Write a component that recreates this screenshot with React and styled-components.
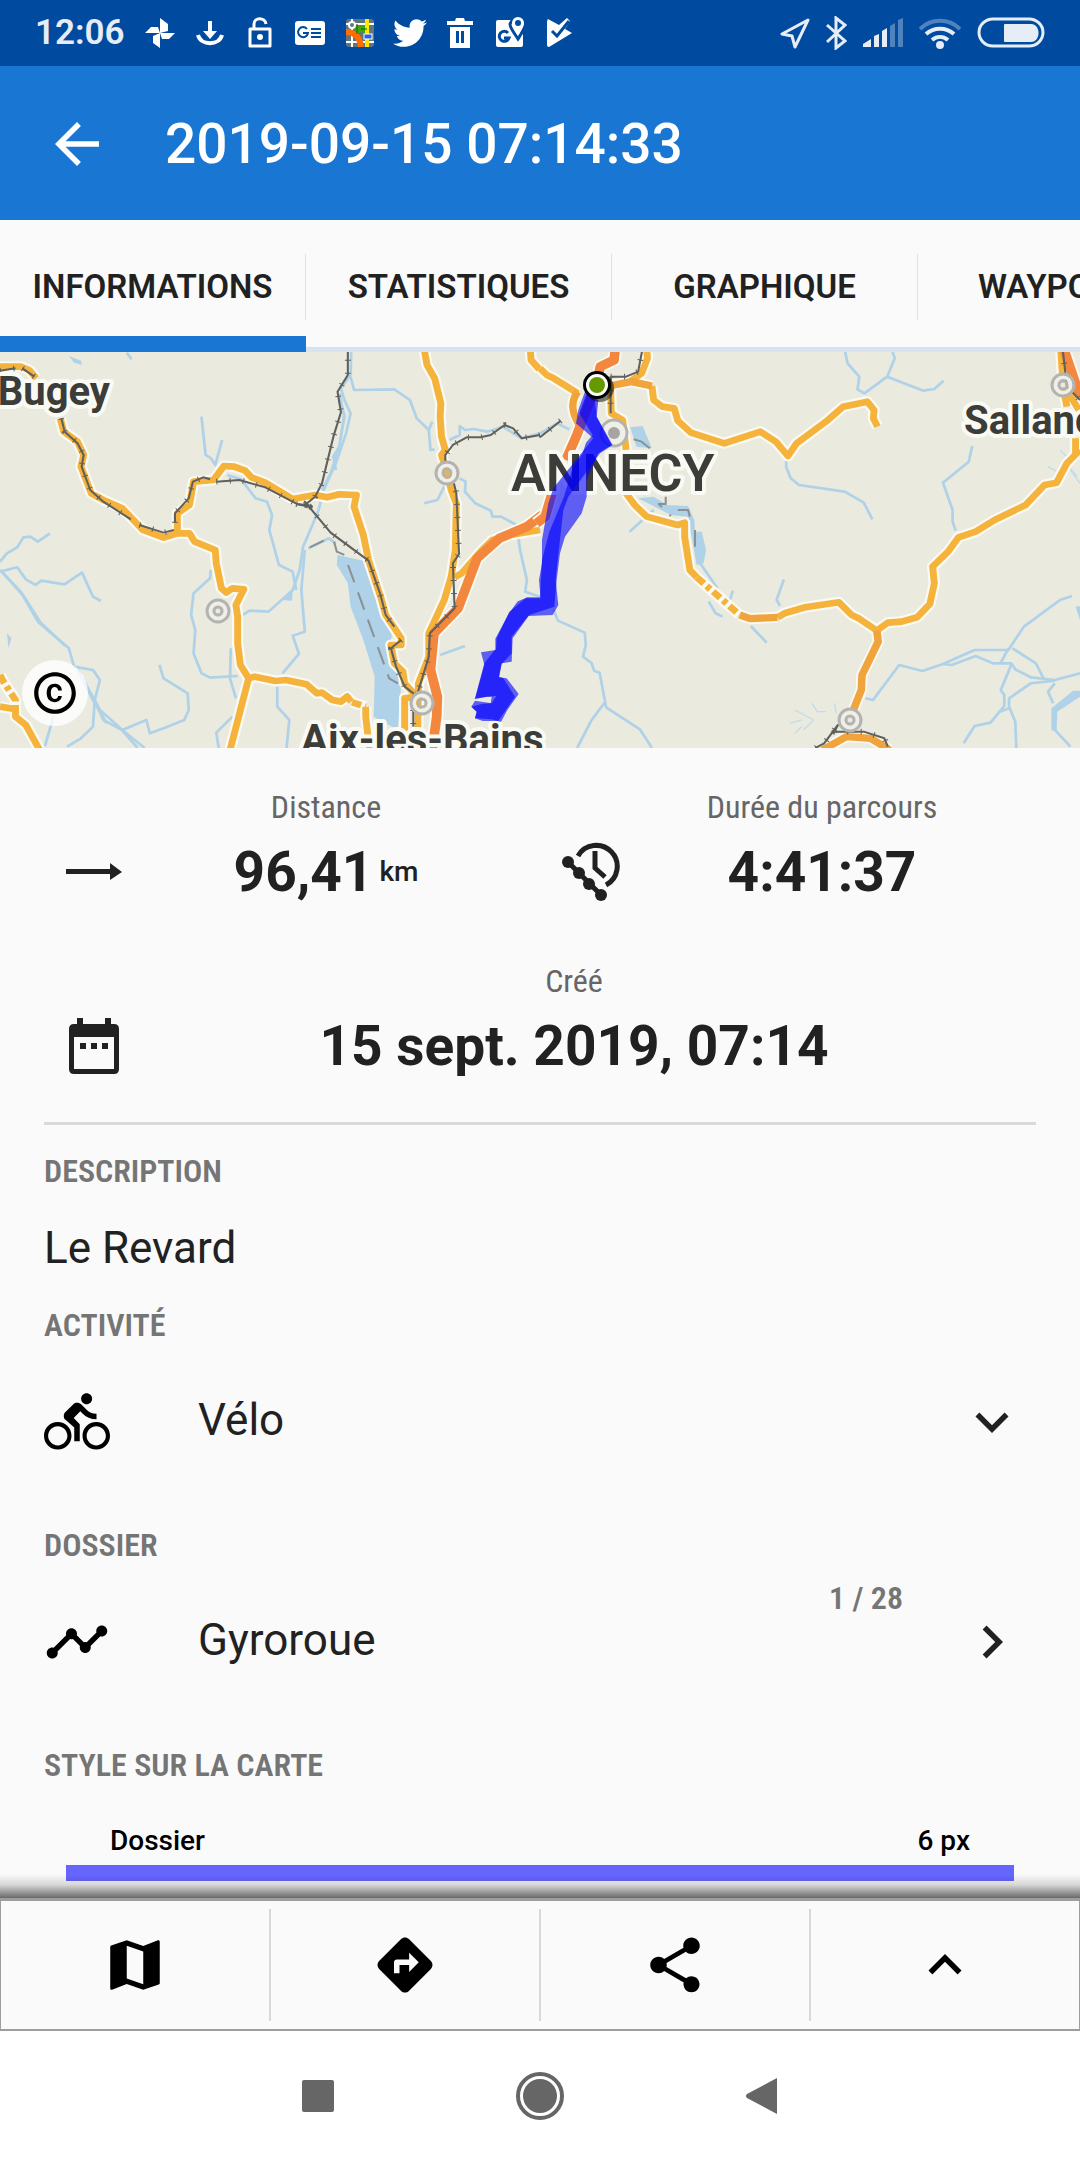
import React, { Component } from 'react';
import styled, { createGlobalStyle } from 'styled-components';
import {
  MdArrowBack,
  MdCopyright,
  MdDirections,
  MdDirectionsBike,
  MdKeyboardArrowDown,
  MdKeyboardArrowRight,
  MdKeyboardArrowUp,
  MdMap,
  MdShare,
  MdTimeline
} from 'react-icons/md';
import { FaTwitter } from 'react-icons/fa';

const GlobalStyle = createGlobalStyle`
  * {
    box-sizing: border-box;
  }
  body {
    margin: 0;
    background: #fafafa;
    color: #212121;
    font-family: Roboto, 'Liberation Sans', sans-serif;
  }
  button, select {
    margin: 0;
    padding: 0;
    border: none;
    background: none;
    color: inherit;
    font: inherit;
  }
  h1, h2, p, dl, dd, ul {
    margin: 0;
    padding: 0;
    font-weight: 400;
  }
  svg {
    display: block;
    flex: none;
  }
`;

const condensed = `'Roboto Condensed', Roboto, 'Liberation Sans', sans-serif`;

const Screen = styled.div`
  display: flex;
  flex-direction: column;
  min-height: 100vh;
`;

const StatusBar = styled.div`
  display: flex;
  align-items: center;
  justify-content: space-between;
  height: 66px;
  padding: 0 35px;
  background: #004ba0;
  color: #e6edf6;
`;

const StatusGroup = styled.div`
  display: flex;
  align-items: center;
  gap: 16px;
`;

const Clock = styled.time`
  padding-right: 2px;
  font-size: 35px;
  line-height: 40px;
  font-weight: 600;
`;

const AppBar = styled.header`
  display: flex;
  align-items: center;
  gap: 55px;
  height: 154px;
  padding: 2px 44px 0;
  background: #1976d2;
  color: #fff;
`;

const IconButton = styled.button`
  display: flex;
  cursor: pointer;
`;

const Title = styled.h1`
  font-size: 55px;
  line-height: 66px;
  font-weight: 500;
`;

const TabList = styled.nav`
  display: flex;
  height: 132px;
  overflow: hidden;
  box-shadow: inset 0 -5px #d6e4f2;
`;

const Tab = styled.button`
  flex: 0 0 306px;
  display: flex;
  align-items: center;
  padding-top: 2px;
  font-size: 33px;
  line-height: 40px;
  font-weight: 600;
  cursor: pointer;
  box-shadow: ${props => (props.$active ? 'inset 0 -16px #1976d2' : 'none')};

  span {
    flex: 1;
    text-align: center;
  }

  &::after {
    content: '';
    width: 1px;
    height: 66px;
    background: #d6e4f2;
  }
`;

const MapBox = styled.section`
  position: relative;
  height: 396px;
  background: #eaeadf;
`;

const MapDrawing = styled.svg`
  width: 100%;
  height: 100%;
`;

const MapLabel = styled.text`
  fill: #3c3d38;
  stroke: #fafaf5;
  stroke-width: 8px;
  stroke-linejoin: round;
  paint-order: stroke;
  font-size: ${props => (props.$city ? '52px' : '40px')};
  font-weight: ${props => (props.$city ? 600 : 700)};
`;

const Attribution = styled.button`
  position: absolute;
  left: 22px;
  bottom: 22px;
  padding: 8px;
  border-radius: 50%;
  background: rgba(255, 255, 255, 0.8);
  color: #000;
  cursor: pointer;
`;

const Facts = styled.dl`
  display: grid;
  grid-template-columns: 1fr 1fr;
  row-gap: 56px;
  padding: 39px 44px 43px;
`;

const FactBox = styled.div`
  display: grid;
  grid-template-columns: 100px 1fr;
  grid-column: ${props => (props.$wide ? '1 / -1' : 'auto')};
  row-gap: 12px;
  align-items: center;
  justify-items: center;
  padding-right: 32px;
`;

const FactLabel = styled.dt`
  grid-column: 2;
  color: #666;
  font-family: ${condensed};
  font-size: 32px;
  line-height: 40px;
`;

const FactValue = styled.dd`
  display: flex;
  align-items: center;
  gap: 6px;
  font-size: 55px;
  line-height: 66px;
  font-weight: 700;

  small {
    font-size: 28px;
    line-height: 36px;
    font-weight: 500;
  }
`;

const Details = styled.main`
  flex: 1;
  margin: 0 44px;
  border-top: 3px solid #d9d9d9;
`;

const Heading = styled.h2`
  display: block;
  margin-top: 26px;
  color: #757575;
  font-family: ${condensed};
  font-size: 32px;
  line-height: 40px;
  font-weight: 600;
  text-transform: uppercase;
`;

const Description = styled.p`
  padding: 30px 0 4px;
  font-size: 44px;
  line-height: 54px;
`;

const rowStyle = `
  display: flex;
  align-items: center;
  width: 100%;
  height: 154px;
  padding-right: 11px;
  text-align: left;
`;

const PickerRow = styled.div`
  ${rowStyle}
`;

const FolderRow = styled.button`
  ${rowStyle}
  cursor: pointer;
`;

const rowText = `
  flex: 1;
  padding: 0 0 4px;
  margin-left: 88px;
  font-size: 44px;
  line-height: 54px;
`;

const ActivitySelect = styled.select`
  ${rowText}
  appearance: none;
`;

const FolderName = styled.span`
  ${rowText}
`;

const Count = styled.span`
  align-self: flex-start;
  margin: 13px 56px 0 0;
  color: #757575;
  font-family: ${condensed};
  font-size: 32px;
  line-height: 40px;
  font-weight: 600;
`;

const StylePreview = styled.div`
  margin: 38px 22px 17px;
  color: #000;
  font-size: 28px;
  line-height: 36px;
  font-weight: 500;
  text-shadow: 0 0 3px #fff;
`;

const StyleCaption = styled.div`
  display: flex;
  justify-content: space-between;
  padding: 0 44px 6px;
`;

const StyleLine = styled.div`
  height: 16px;
  background: #66f;
`;

const Toolbar = styled.footer`
  position: relative;
  display: flex;
  height: 133px;
  padding: 8px 0;
  border: 1px solid #9e9e9e;
  border-top-width: 3px;
  border-bottom-width: 2px;

  &::before {
    content: '';
    position: absolute;
    left: -1px;
    right: -1px;
    bottom: 100%;
    height: 24px;
    margin-bottom: 3px;
    background: linear-gradient(
      rgba(0, 0, 0, 0),
      rgba(0, 0, 0, 0.14) 45%,
      rgba(0, 0, 0, 0.58)
    );
  }
`;

const ToolButton = styled.button`
  flex: 1;
  display: flex;
  align-items: center;
  justify-content: center;
  color: #000;
  cursor: pointer;

  & + & {
    border-left: 2px solid #d9d9d9;
  }
`;

const SystemNav = styled.nav`
  display: grid;
  grid-template-columns: repeat(3, 222px);
  justify-content: center;
  align-items: center;
  justify-items: center;
  height: 129px;
  background: #fff;
  color: #666;
`;

// the map is digitised in two halves, x from the left edge and from the middle
const LEFT = 'scale(0.3444 0.3333) translate(0 -6)';
const RIGHT = 'translate(540 0) scale(0.3444 0.3333) translate(0 -6)';
const TRACK = 'translate(420 0) scale(0.3333) translate(0 -6)';

const leftMap = {
  lakes: [
    'M980 615L1055 632L1070 660L1105 780L1138 855L1130 890L1150 960L1165 1000L1155 1140L1085 1100L1088 980L1055 870L1018 770L1010 700L978 645Z',
    'M20 850L33 865L25 895Z',
    'M820 750L850 722L848 752Z',
    'M200 18L235 32L238 44L215 38Z'
  ],
  rivers: [
    'M1020 0L1018 75L990 115L1000 150L1018 190L1005 250L975 340L940 420L925 480L905 530L880 590L870 660L850 720L780 785L725 782L705 795',
    'M985 130L1000 200L985 290L960 370L935 420M1000 190L985 290L968 320L975 360',
    'M1018 80L1028 120L1145 118L1190 150L1210 205L1245 240L1250 300L1262 298M1245 240L1255 215',
    'M1305 270L1335 255L1335 228L1350 240L1375 237L1415 245L1460 230L1515 265L1568 250',
    'M1335 385L1352 395L1350 425L1380 460L1425 482L1430 500L1455 500L1500 525L1510 600L1530 690L1525 725L1568 740',
    'M1232 460L1270 450L1295 400M1278 915L1350 888M368 8L382 28',
    'M585 200L597 315L613 325L625 345L645 270',
    'M660 375L700 388L742 445L775 455L790 495L782 540L810 645L850 665L860 720',
    'M885 600L875 720L885 845L850 857L868 912L820 970M805 1000L805 1070L840 1110L832 1194',
    'M612 660L610 685L562 730L555 795L567 840L562 910L585 970L610 983L690 978',
    'M670 895L668 985L685 1045M675 1100L628 1148L635 1194',
    'M0 635L20 610L50 592L68 562L88 560L110 575L145 550',
    'M0 665L50 652L75 688L103 705L120 692L187 703L238 668L270 740L293 753',
    'M0 660L60 725L110 815L200 895L215 950L270 960L290 990L275 1050L300 1110L355 1140L420 1194',
    'M10 670L70 740L118 818L190 888M240 985L290 1080L345 1130L400 1194M225 960L270 1050L310 1120',
    'M275 1050L270 1130L235 1165L195 1190M155 1100L130 1190',
    'M355 1140L425 1110L435 1150L475 1135L535 1110L548 1080L545 1030L475 985L463 945',
    'M895 595L955 565L975 580'
  ],
  roads: [
    'M0 50L60 50L85 60L105 85',
    'M175 205L185 245L225 275L243 315L235 350L265 430L300 450L355 475L415 540L475 563L515 550L550 550L565 575L625 600L628 640L643 715L657 728L675 715L708 718L685 765L690 800L690 880L698 945L722 985L740 980L800 993L830 990L890 1003L920 1030L935 1028L965 1050L990 1055L1008 1040L1020 1055',
    'M515 550L515 490L550 465L562 395L620 390L650 348L680 350L712 362L730 382L770 398L850 447L915 435L950 442L985 433L1035 435L1028 470L1055 555L1070 630L1105 740L1120 795L1165 865L1165 885L1135 885L1145 940L1170 965L1175 1000L1210 1040',
    'M722 985L668 1200',
    'M1232 0L1240 45L1262 85L1280 160L1278 200L1282 260L1293 300L1282 315L1298 370L1310 420L1325 460L1322 600L1310 680L1290 750L1245 850L1245 920L1215 1000L1212 1200',
    'M1320 682L1340 670L1400 600L1430 570L1480 555L1568 540',
    'M1540 0L1542 30L1568 60',
    'M1210 1040L1175 1045L1175 1200M1062 1070L1062 1100L1073 1200',
    'M0 1070L45 1078L45 1100L75 1125L115 1200'
  ],
  tunnels: ['M1022 1057L1062 1070', 'M0 975L10 995L45 1050L45 1078'],
  darkRoads: [],
  motorways: [
    'M1580 490L1530 530L1450 565L1385 625L1330 775L1260 850L1250 960L1270 1040L1268 1100L1255 1200'
  ],
  rails: [
    'M0 62L45 55M65 55L100 80',
    'M178 205L188 245L225 280L243 315L237 350L262 420L300 455L380 508M405 525L475 548L505 540M508 518L508 490L548 445L560 395L590 382L610 388',
    'M628 395L695 390L770 412L862 462L885 465L915 440L935 400L968 260L990 187L980 125L1010 75L1010 0',
    'M860 462L900 470L885 455L960 548L1070 632L1105 735L1120 795L1145 830M1165 870L1135 895L1150 950L1175 1010L1210 1038L1245 920L1248 850L1320 775L1315 640L1333 612L1325 430L1318 400',
    'M1293 345L1293 315L1315 285L1355 262L1395 262L1425 255L1465 225L1490 235L1515 265L1568 255',
    'M1200 1080L1200 1130'
  ],
  borders: ['M900 592L940 572M970 575L978 605L1000 615L1130 985L1155 1000']
};

const rightMap = {
  lakes: [
    'M262 232L298 228L325 295L280 290Z',
    'M285 445L330 440L370 465L430 468L448 510L450 545L470 545L482 600L475 640L455 645L440 560L430 500L380 495Z',
    'M1568 1022L1548 1022L1485 1075L1485 1140L1500 1145L1502 1085L1568 1040Z',
    'M1555 770L1568 768L1568 810Z'
  ],
  rivers: [
    'M40 780L52 812L130 848L133 885L125 920L150 940L157 962L173 968L192 1072L290 1138L325 1194M190 1055L150 1110L108 1194',
    'M0 250L50 220L85 238M885 0L893 40L927 80L922 118L942 130L1008 80L1113 122L1145 117L1172 92M1008 80L1030 25L1022 0',
    'M715 330L715 352L728 385L752 405L885 425L940 458L965 508',
    'M1255 288L1245 335L1170 398L1198 480L1198 515L1207 542',
    'M465 640L515 715M708 688L687 750L697 768M560 722L550 755M490 755L510 790L530 800M612 828L658 878M260 545L330 480',
    'M945 1045L967 1050L1043 945L1110 963L1170 942L1262 900L1360 900L1405 830L1510 750L1545 738',
    'M1170 942L1195 945L1265 918L1315 940L1368 940L1380 958L1425 982L1495 990L1568 970M1372 895L1440 940L1462 985M1360 895L1338 938',
    'M1368 945L1338 1020L1348 1035L1348 1068L1308 1118L1262 1128L1230 1180M1495 992L1425 1000L1362 1045L1362 1070L1380 1115L1383 1194M1335 1085L1362 1075M1495 1000L1475 1025L1490 1060M1495 1140L1540 1190'
  ],
  streams: [
    'M740 1080L795 1110L765 1140M725 1120L760 1110M790 1060L805 1085L830 1085M740 1150L760 1130M855 1060L860 1090',
    'M1475 350L1510 370M1490 390L1530 360M1510 300L1540 330M1540 360L1568 400M1520 330L1560 380'
  ],
  roads: [
    'M0 55L20 75L40 85L110 130',
    'M310 0L312 25L295 70L265 92M205 120L207 190L240 210L250 300',
    'M325 108L330 150L355 170L390 175L400 212L438 248L535 280L640 245L685 275L720 318L745 280L830 215L880 170L950 155L970 180L968 205L980 230',
    'M250 430L275 465L310 500L400 525L420 518L420 560L435 660L455 682',
    'M690 802L710 790L770 772L868 757L905 795L925 805L978 842L1010 818L1050 815L1095 802L1132 762L1145 700L1140 650L1185 605L1215 562L1265 545L1320 510L1410 465L1465 405L1500 398L1530 340L1568 300M1555 265L1555 310',
    'M1512 0L1518 90M1520 120L1530 170M1535 130L1568 185'
  ],
  tunnels: ['M455 682L580 795'],
  darkRoads: [
    'M110 125C88 155 90 185 115 225',
    'M170 130L215 105L265 95L325 108',
    'M580 795L610 806L690 802M978 842L982 875L935 975L933 1020L908 1085',
    'M820 1200L890 1160L960 1165L1015 1200'
  ],
  motorways: [
    'M218 0L215 30L175 50L165 100L120 220L105 260L75 330',
    'M35 430L15 500L-10 520',
    'M1522 0L1568 140'
  ],
  rails: [
    'M205 80L205 190M205 80L250 80L285 65L297 0M60 212L0 262',
    'M800 1194L825 1180L865 1125L855 1145L940 1145L1000 1165L1010 1190M1518 0L1530 110L1568 150'
  ],
  borders: ['M272 268L295 275L325 300M365 440L365 462L345 462L380 498M400 480L430 480L435 500M450 540L450 590']
};

const towns = [[447, 121], [218, 259], [422, 351], [1063, 33], [850, 368]];

const lines = (list, props) => list.map(d => <path key={d} d={d} {...props} />);

const MapHalf = ({ data, transform }) => (
  <g transform={transform} fill="none" strokeLinejoin="round">
    {lines(data.lakes, { fill: '#b0d2e8' })}
    {lines(data.rivers, { stroke: '#b0d2e8', strokeWidth: 8 })}
    {lines(data.streams || [], { stroke: '#c3dcea', strokeWidth: 4 })}
    {lines(data.borders, { stroke: '#8a9195', strokeWidth: 6, strokeDasharray: '55 32' })}
    {lines([...data.roads, ...data.tunnels, ...data.darkRoads], { stroke: '#fafaf5', strokeWidth: 33 })}
    {lines(data.motorways, { stroke: '#fafaf5', strokeWidth: 39 })}
    {lines(data.roads, { stroke: '#f6b33c', strokeWidth: 20 })}
    {lines(data.tunnels, { stroke: '#f6b33c', strokeWidth: 20, strokeDasharray: '28 11 14 11' })}
    {lines(data.darkRoads, { stroke: '#f1a43c', strokeWidth: 22 })}
    {lines(data.motorways, { stroke: '#f3873d', strokeWidth: 28 })}
    {lines(data.rails, { stroke: '#60605c', strokeWidth: 6 })}
    {lines(data.rails, { stroke: '#60605c', strokeWidth: 17, strokeDasharray: '3 36' })}
  </g>
);

const TrackMap = () => (
  <MapDrawing viewBox="0 0 1080 396" preserveAspectRatio="xMidYMid slice" role="img" aria-label="Carte du parcours">
    <MapHalf data={leftMap} transform={LEFT} />
    <MapHalf data={rightMap} transform={RIGHT} />
    {towns.map(([x, y]) => (
      <g key={x} fill="none" stroke="#b3b3b1">
        <circle cx={x} cy={y} r="8" stroke="#efefe8" strokeWidth="4" />
        <circle cx={x} cy={y} r="11" strokeWidth="3" />
        <circle cx={x} cy={y} r="4" strokeWidth="3" />
      </g>
    ))}
    <circle cx="614" cy="81" r="13" fill="#efefe8" stroke="#b3b3b1" strokeWidth="3" />
    <circle cx="614" cy="81" r="6" fill="#a5a5a3" />
    <MapLabel x="110" y="53" textAnchor="end">Bugey</MapLabel>
    <MapLabel x="511" y="139" $city>ANNECY</MapLabel>
    <MapLabel x="301" y="401">Aix-les-Bains</MapLabel>
    <MapLabel x="964" y="82">Sallanches</MapLabel>
    <g transform={TRACK} fill="#00f" fillOpacity="0.6">
      <path d="M495 125L475 180L468 220L520 265L400 415L385 460L366 570V640L357 690L362 745H316L293 754L266 792L226 866V898L193 940L164 1048L200 1040L215 1040L212 1060L185 1062L154 1070L170 1085L165 1105L188 1113H235L285 1040L250 985L237 980L245 942L275 910V860L325 798L398 795L415 765L407 690L412 640L430 480L445 440L540 310L578 285L530 200L535 150Z" />
      <path d="M500 130L478 190L518 255L498 278L488 310L456 360L432 440L388 545L366 630L360 742L320 742L268 785L230 865L228 900L183 907L193 945L166 1045L230 1037L215 1060L165 1052L154 1070L170 1085L165 1105L215 1108L243 1116L262 1080L296 1032L260 985L237 982L245 940L275 935L278 865L328 795L403 770L410 690L420 610L435 560L485 490L500 440V390L535 310L575 285L530 200L525 150Z" />
    </g>
    <circle cx="600" cy="36" r="14" fill="#000" fillOpacity="0.5" />
    <circle cx="597" cy="33" r="14" />
    <circle cx="597" cy="33" r="11" fill="#fff" />
    <circle cx="597" cy="33" r="8" fill="#669900" />
  </MapDrawing>
);

const StatusIcon = ({ children, width = 34 }) => (
  <svg width={width} height="34" viewBox={`0 0 ${width} 34`} fill="#fff" aria-hidden="true">
    {children}
  </svg>
);

const Notifications = () => (
  <StatusGroup>
    <Clock>12:06</Clock>
    <StatusIcon>
      <path d="M17 2L25 8V15L17 17ZM32 17L26 23H19L17 17ZM17 32L10 27V20L17 17ZM2 17L8 11H15L17 17Z" />
    </StatusIcon>
    <StatusIcon>
      <path d="M15 5H19V15H24L17 23L10 15H15Z" />
      <path d="M5 19C8 30 26 30 29 19" fill="none" stroke="#fff" strokeWidth="4" />
    </StatusIcon>
    <StatusIcon>
      <path d="M11 12V8C11 1 22 1 23 8M7 13H27V30H7Z" fill="none" stroke="#fff" strokeWidth="3" strokeLinejoin="round" />
      <circle cx="17" cy="21" r="3" />
    </StatusIcon>
    <StatusIcon>
      <rect x="2" y="5" width="30" height="24" rx="3" />
      <path d="M14 13A5 5 0 1 0 15 17H10M18 13H28M18 17H28M18 21H28" fill="none" stroke="#004ba0" strokeWidth="2" />
    </StatusIcon>
    <StatusIcon>
      <rect x="3" y="3" width="28" height="28" rx="3" fill="#5e7480" />
      <path d="M11 9L24 7V18L19 16L12 18Z" fill="#3fa70b" />
      <path d="M9 3V31M3 8H31M3 26H31" stroke="#fff" strokeWidth="2" />
      <circle cx="9" cy="9" r="3" fill="#5e7480" stroke="#fff" strokeWidth="2" />
      <path d="M24 3V31" stroke="#ffe800" strokeWidth="4" />
      <path d="M3 16C12 16 17 22 18 31" fill="none" stroke="#ff6d00" strokeWidth="6" />
      <path d="M14 8V18M18 13H24" stroke="#1c5c14" strokeWidth="1" />
      <rect x="21" y="18" width="8" height="5" fill="#2a62e0" stroke="#fff" />
    </StatusIcon>
    <FaTwitter size={34} color="#fff" aria-hidden="true" />
    <StatusIcon>
      <path d="M4 5H12L13 2H21L22 5H30V9H4ZM7 11H27V32H7ZM13 15V27H16V15ZM18 15V27H21V15Z" fillRule="evenodd" />
    </StatusIcon>
    <StatusIcon>
      <rect x="3" y="4" width="27" height="27" rx="2" />
      <path d="M15 17A5 5 0 1 0 16 22H11" fill="none" stroke="#004ba0" strokeWidth="3" />
      <path d="M25 23C20 15 17 12 17 8A8 8 0 0 1 32 8C32 12 30 15 25 23Z" stroke="#004ba0" strokeWidth="3" />
      <path d="M25 19C21 13 19 10 19 7A6 6 0 0 1 31 7C31 10 29 13 25 19Z" />
      <circle cx="25" cy="7" r="3" fill="#004ba0" />
    </StatusIcon>
    <StatusIcon>
      <path d="M5 3L16 9L24 2L27 5L22 13L29 17L6 31Q4 31 4 29V5Z" />
      <path d="M9 15L14 20L26 5" fill="none" stroke="#004ba0" strokeWidth="3" />
    </StatusIcon>
  </StatusGroup>
);

const SystemState = () => (
  <StatusGroup>
    <svg width="30" height="34" viewBox="0 0 30 34" fill="none" stroke="currentColor" strokeWidth="3" strokeLinejoin="round" aria-hidden="true">
      <path d="M28 4L2 18L12 20L15 31Z" />
    </svg>
    <svg width="21" height="34" viewBox="0 0 21 34" fill="none" stroke="currentColor" strokeWidth="3" aria-hidden="true">
      <path d="M1 9L19 25L10 32V2L19 9L1 26" />
    </svg>
    <svg width="40" height="34" viewBox="0 0 40 34" fill="currentColor" aria-hidden="true">
      <path d="M0 31V28L8 23V31ZM11 31V20L16 18V31ZM19 31V15L24 12V31Z" />
      <path d="M27 31V10L32 7V31ZM35 31V4L40 2V31Z" opacity="0.35" />
    </svg>
    <svg width="42" height="34" viewBox="0 0 42 34" fill="none" stroke="currentColor" strokeWidth="4" aria-hidden="true">
      <path d="M1 13C12 2 30 2 41 13" opacity="0.35" />
      <path d="M7 18C15 11 27 11 35 18M13 24C18 20 24 20 29 24" />
      <circle cx="21" cy="29" r="2" />
    </svg>
    <svg width="68" height="34" viewBox="0 0 68 34" aria-hidden="true">
      <rect x="2" y="3" width="64" height="27" rx="14" fill="none" stroke="currentColor" strokeWidth="3" />
      <path d="M28 8H54C64 8 64 26 54 26H28Q27 26 27 25V9Q27 8 28 8Z" fill="currentColor" />
    </svg>
  </StatusGroup>
);

const DistanceIcon = () => (
  <svg width="56" height="20" viewBox="0 0 56 20" fill="currentColor" aria-hidden="true">
    <path d="M0 7H44V1L56 10L44 18V12H0Z" />
  </svg>
);

const DurationIcon = () => (
  <svg width="60" height="60" viewBox="0 0 60 60" fill="none" stroke="currentColor" strokeWidth="5" aria-hidden="true">
    <path d="M18 14A21 21 0 1 1 46 43" />
    <path d="M35 9V26L45 35" />
    <path d="M8 20L41 53" />
    <g fill="currentColor" stroke="none">
      <circle cx="8" cy="20" r="6" />
      <circle cx="19" cy="31" r="6" />
      <circle cx="29" cy="42" r="6" />
      <circle cx="41" cy="53" r="6" />
    </g>
  </svg>
);

const CalendarIcon = () => (
  <svg width="50" height="58" viewBox="0 0 50 58" fill="currentColor" aria-hidden="true">
    <path fillRule="evenodd" d="M8 1H14V7H36V1H42V7H45Q50 7 50 12V52Q50 57 45 57H5Q0 57 0 52V12Q0 7 5 7H8ZM5 20V52H45V20ZM11 26H17V32H11ZM22 26H28V32H22ZM33 26H39V32H33Z" />
  </svg>
);

const Fact = ({ icon, label, value, unit, wide }) => (
  <FactBox $wide={wide}>
    <FactLabel>{label}</FactLabel>
    {icon}
    <FactValue>
      {value}
      {unit && <small>{unit}</small>}
    </FactValue>
  </FactBox>
);

const tabs = ['INFORMATIONS', 'STATISTIQUES', 'GRAPHIQUE', 'WAYPOINTS'];

const tools = [
  { label: 'Carte', Icon: MdMap },
  { label: 'Itinéraire', Icon: MdDirections },
  { label: 'Partager', Icon: MdShare },
  { label: 'Plus', Icon: MdKeyboardArrowUp }
];

class App extends Component {
  state = {
    tab: tabs[0],
    activity: 'Vélo'
  };

  render() {
    return (
      <Screen>
        <GlobalStyle />
        <StatusBar>
          <Notifications />
          <SystemState />
        </StatusBar>
        <AppBar>
          <IconButton aria-label="Retour">
            <MdArrowBack size={66} />
          </IconButton>
          <Title>2019-09-15 07:14:33</Title>
        </AppBar>
        <TabList>
          {tabs.map(tab => (
            <Tab key={tab} $active={tab === this.state.tab} onClick={() => this.setState({ tab })}>
              <span>{tab}</span>
            </Tab>
          ))}
        </TabList>
        <MapBox>
          <TrackMap />
          <Attribution aria-label="Copyright">
            <MdCopyright size={50} />
          </Attribution>
        </MapBox>
        <Facts>
          <Fact icon={<DistanceIcon />} label="Distance" value="96,41" unit="km" />
          <Fact icon={<DurationIcon />} label="Durée du parcours" value="4:41:37" />
          <Fact icon={<CalendarIcon />} label="Créé" value="15 sept. 2019, 07:14" wide />
        </Facts>
        <Details>
          <Heading>Description</Heading>
          <Description>Le Revard</Description>
          <Heading as="label" htmlFor="activity">Activité</Heading>
          <PickerRow>
            <MdDirectionsBike size={66} color="#000" />
            <ActivitySelect
              id="activity"
              value={this.state.activity}
              onChange={e => this.setState({ activity: e.target.value })}
            >
              <option>Vélo</option>
            </ActivitySelect>
            <MdKeyboardArrowDown size={66} />
          </PickerRow>
          <Heading>Dossier</Heading>
          <FolderRow>
            <MdTimeline size={66} color="#000" />
            <FolderName>Gyroroue</FolderName>
            <Count>1 / 28</Count>
            <MdKeyboardArrowRight size={66} />
          </FolderRow>
          <Heading>Style sur la carte</Heading>
          <StylePreview>
            <StyleCaption>
              <span>Dossier</span>
              <span>6 px</span>
            </StyleCaption>
            <StyleLine />
          </StylePreview>
        </Details>
        <Toolbar>
          {tools.map(({ label, Icon }) => (
            <ToolButton key={label} aria-label={label}>
              <Icon size={66} />
            </ToolButton>
          ))}
        </Toolbar>
        <SystemNav>
          <IconButton aria-label="Applications récentes">
            <svg width="32" height="32" fill="currentColor">
              <rect width="32" height="32" rx="2" />
            </svg>
          </IconButton>
          <IconButton aria-label="Accueil">
            <svg width="50" height="50" fill="currentColor">
              <circle cx="25" cy="25" r="17" />
              <circle cx="25" cy="25" r="22" fill="none" stroke="currentColor" strokeWidth="4" />
            </svg>
          </IconButton>
          <IconButton aria-label="Précédent">
            <svg width="32" height="38" fill="currentColor">
              <path d="M31 1V37L1 21Q-1 19 1 17Z" />
            </svg>
          </IconButton>
        </SystemNav>
      </Screen>
    );
  }
}

export default App;
